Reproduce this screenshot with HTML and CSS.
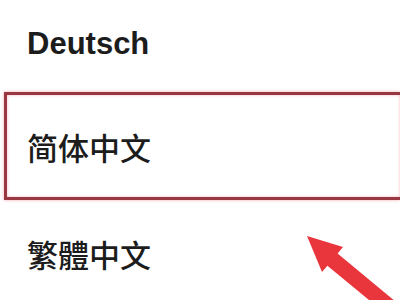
FILE: index.html
```html
<!DOCTYPE html>
<html lang="en">
<head>
    <meta charset="UTF-8">
    <title>Language</title>
    <link rel="stylesheet" href="styles.css">
</head>
<body>
    <div class="language-list">
        <div class="language-row first">Deutsch</div>
        <div class="language-row selected" lang="zh-Hans">简体中文</div>
        <div class="language-row" lang="zh-Hant">繁體中文</div>
    </div>

    <!-- pointer arrow drawn over the list -->
    <svg class="arrow" viewBox="0 0 400 300" width="400" height="300">
        <polygon points="307,236 343,247 337.6,253.4 410,313.6 400,325.6 327.4,265.7 322,272" fill="#e9363d"/>
    </svg>
</body>
</html>
```

FILE: styles.css
```css
body {
    margin: 0;
    background-color: #ffffff;
    overflow: hidden;
    width: 400px;
    height: 300px;
    position: relative;
}

.language-list {
    margin-left: 4px;
    width: 396px;
}

.language-row {
    box-sizing: border-box;
    height: 106px;
    display: flex;
    align-items: center;
    padding-left: 20px;
    border: 3px solid transparent;
    border-right: none; /* list runs off the right edge of the screen */
    color: #1c1c1c;
    font-family: "Noto Sans CJK SC", sans-serif;
    font-weight: 500;
    font-size: 31px;
}

.language-row.first {
    height: 92px;
    padding-bottom: 4px;
    font-family: "Liberation Sans", Arial, sans-serif;
    font-weight: bold;
}

.language-row[lang="zh-Hant"] {
    font-family: "Noto Sans CJK TC", sans-serif;
}

.language-row.selected {
    height: 108px;
    border-color: #983842;
    box-shadow: 0 0 3px rgba(235, 110, 120, 0.6), inset 0 0 3px rgba(235, 110, 120, 0.5);
}

.arrow {
    position: absolute;
    left: 0;
    top: 0;
}
```
